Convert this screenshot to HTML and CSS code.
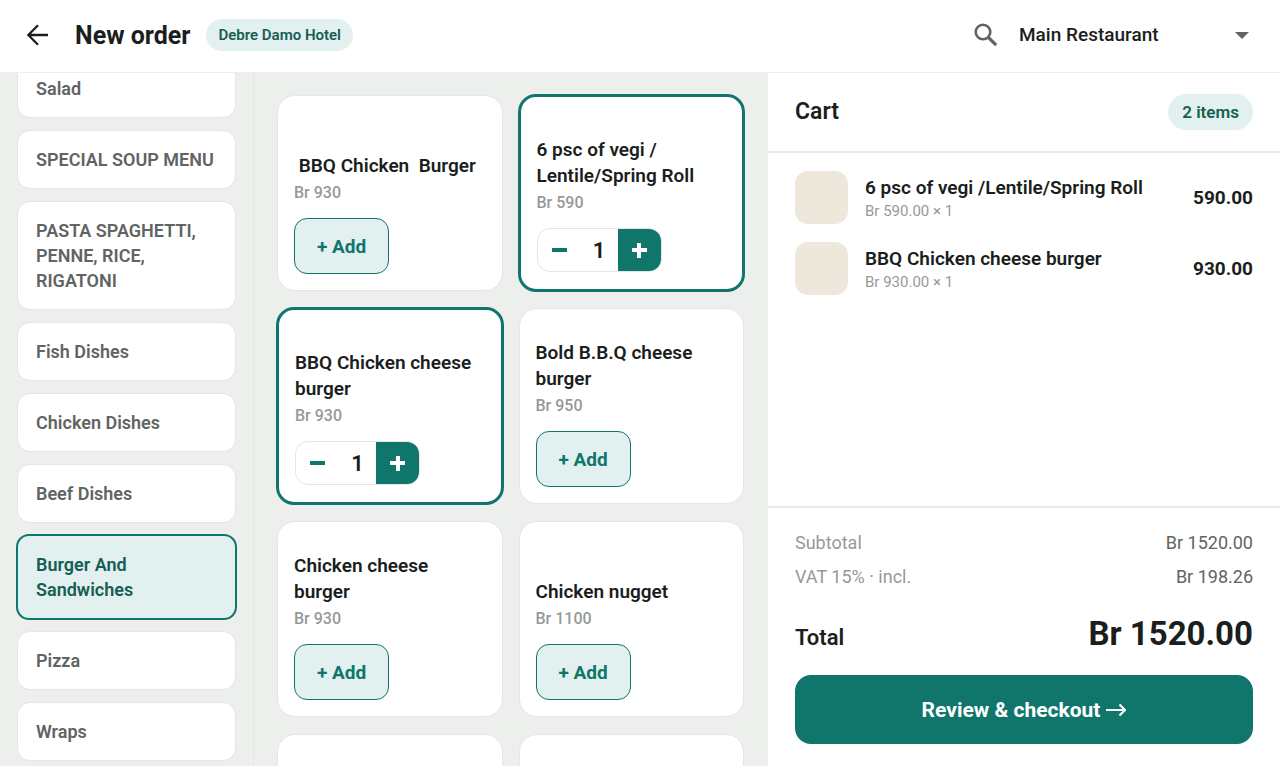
FILE: index.html
```
<!DOCTYPE html>
<html lang="en">

<head>
    <meta charset="UTF-8">
    <meta name="viewport" content="width=device-width, initial-scale=1.0">
    <title>New order</title>
    <link rel="stylesheet" href="styles.css">
</head>

<body>
    <header class="topbar">
        <button class="icon-btn" aria-label="Back">
            <svg width="22" height="22" viewBox="0 0 22 22" fill="none" stroke="currentColor" stroke-width="2.3">
                <path d="M21 11H1.500M11 1.200L1.300 11l9.700 9.800" />
            </svg>
        </button>
        <h1>New order</h1>
        <span class="badge badge-small">Debre Damo Hotel</span>
        <div class="topbar-right">
            <button class="icon-btn search" aria-label="Search">
                <svg width="24" height="24" viewBox="0 0 24 24" fill="none" stroke="currentColor">
                    <circle cx="9" cy="9" r="7.3" stroke-width="2.6" />
                    <path d="M14.3 14.3l7.9 7.9" stroke-width="3.2" />
                </svg>
            </button>
            <div class="select-wrap">
                <select aria-label="Restaurant">
                    <option>Main Restaurant</option>
                </select>
            </div>
        </div>
    </header>

    <div class="layout">
        <nav class="sidebar">
            <div class="category-list">
                <button class="category">Salad</button>
                <button class="category">SPECIAL SOUP MENU</button>
                <button class="category">PASTA SPAGHETTI, PENNE, RICE, RIGATONI</button>
                <button class="category">Fish Dishes</button>
                <button class="category">Chicken Dishes</button>
                <button class="category">Beef Dishes</button>
                <button class="category active">Burger And Sandwiches</button>
                <button class="category">Pizza</button>
                <button class="category">Wraps</button>
            </div>
        </nav>

        <main class="menu">
            <div class="menu-grid">
                <article class="item">
                    <h2> BBQ Chicken  Burger</h2>
                    <p class="price">Br 930</p>
                    <button class="add-btn">+ Add</button>
                </article>
                <article class="item selected">
                    <h2>6 psc of vegi /<wbr>Lentile/Spring Roll</h2>
                    <p class="price">Br 590</p>
                    <div class="stepper">
                        <button class="minus" aria-label="Remove one"></button>
                        <span>1</span>
                        <button class="plus" aria-label="Add one"></button>
                    </div>
                </article>
                <article class="item selected">
                    <h2>BBQ Chicken cheese burger</h2>
                    <p class="price">Br 930</p>
                    <div class="stepper">
                        <button class="minus" aria-label="Remove one"></button>
                        <span>1</span>
                        <button class="plus" aria-label="Add one"></button>
                    </div>
                </article>
                <article class="item">
                    <h2>Bold B.B.Q cheese burger</h2>
                    <p class="price">Br 950</p>
                    <button class="add-btn">+ Add</button>
                </article>
                <article class="item">
                    <h2>Chicken cheese burger</h2>
                    <p class="price">Br 930</p>
                    <button class="add-btn">+ Add</button>
                </article>
                <article class="item">
                    <h2>Chicken nugget</h2>
                    <p class="price">Br 1100</p>
                    <button class="add-btn">+ Add</button>
                </article>
                <article class="item"></article>
                <article class="item"></article>
            </div>
        </main>

        <aside class="cart">
            <div class="cart-header">
                <h2>Cart</h2>
                <span class="badge">2 items</span>
            </div>
            <ul class="cart-items">
                <li>
                    <div class="thumb"></div>
                    <div class="cart-info">
                        <h3>6 psc of vegi /Lentile/Spring Roll</h3>
                        <p>Br 590.00 × 1</p>
                    </div>
                    <strong>590.00</strong>
                </li>
                <li>
                    <div class="thumb"></div>
                    <div class="cart-info">
                        <h3>BBQ Chicken cheese burger</h3>
                        <p>Br 930.00 × 1</p>
                    </div>
                    <strong>930.00</strong>
                </li>
            </ul>
            <div class="cart-footer">
                <div class="row"><span>Subtotal</span><span class="amount">Br 1520.00</span></div>
                <div class="row"><span>VAT 15% · incl.</span><span class="amount">Br 198.26</span></div>
                <div class="total"><span>Total</span><strong>Br 1520.00</strong></div>
                <button class="checkout">
                    Review &amp; checkout
                    <svg width="20" height="14" viewBox="0 0 20 14" fill="none" stroke="currentColor" stroke-width="2.2">
                        <path d="M0 7h19M13.5 1.5L19 7l-5.500 5.500" />
                    </svg>
                </button>
            </div>
        </aside>
    </div>
</body>

</html>
```
FILE: styles.css
```
:root {
    --primary: #10766c;
    --primary-dark: #155e54;
    --primary-light: #e2f0ef;
    --background: #edefed;
    --line: #e4e7e5;
    --text: #1a1e1d;
    --text-mid: #616462;
    --text-light: #979998;
}

* {
    margin: 0;
    padding: 0;
    box-sizing: border-box;
}

body {
    font-family: Roboto, "Liberation Sans", sans-serif;
    background: var(--background);
    color: var(--text);
    height: 100vh;
    display: flex;
    flex-direction: column;
    overflow: hidden;
}

button,
select {
    font-family: inherit;
    border: none;
    background: none;
    cursor: pointer;
}

/* Top bar */
.topbar {
    display: flex;
    align-items: center;
    height: 73px;
    flex-shrink: 0;
    padding: 0 27px 2px;
    background: #fff;
    border-bottom: 1px solid var(--background);
}

.icon-btn {
    display: flex;
    color: var(--text);
}

.icon-btn.search {
    color: var(--text-mid);
}

.topbar h1 {
    font-size: 25px;
    font-weight: 700;
    line-height: 32px;
    margin: 1px 16px 0 26px;
}

.badge {
    background: var(--primary-light);
    color: var(--primary-dark);
    font-size: 17px;
    font-weight: 600;
    line-height: 20px;
    padding: 8px 14px;
    border-radius: 18px;
}

.badge-small {
    font-size: 15px;
    padding: 6px 12px;
}

.topbar-right {
    display: flex;
    align-items: center;
    gap: 21px;
    margin-left: auto;
}

.select-wrap {
    position: relative;
    width: 234px;
}

.select-wrap::after {
    content: "";
    position: absolute;
    right: 4px;
    top: 50%;
    margin-top: -3px;
    border: 7px solid transparent;
    border-top-color: var(--text-mid);
    border-bottom: none;
    pointer-events: none;
}

select {
    appearance: none;
    width: 100%;
    color: var(--text);
    font-size: 19px;
    font-weight: 500;
    line-height: 28px;
}

/* Columns */
.layout {
    display: grid;
    grid-template-columns: 254px 1fr 40%;
    flex: 1;
    min-height: 0;
}

.sidebar {
    overflow: hidden;
    padding: 0 17px;
    border-right: 1px solid var(--line);
}

.category-list {
    display: flex;
    flex-direction: column;
    gap: 12px;
    margin: -14px 0 12px;
}

.category {
    background: #fff;
    border: 1px solid var(--line);
    border-radius: 13px;
    padding: 16px 18px;
    color: var(--text-mid);
    font-size: 18px;
    font-weight: 600;
    line-height: 25px;
    text-align: left;
}

.category.active {
    background: var(--primary-light);
    border: 2px solid var(--primary);
    color: var(--primary-dark);
    margin: -1px;
}

/* Menu */
.menu {
    overflow: hidden;
    padding: 22px 24px 22px 23px;
}

.menu-grid {
    display: grid;
    grid-template-columns: 1fr 1fr;
    grid-auto-rows: minmax(196px, auto);
    gap: 17px 16px;
}

.item {
    display: flex;
    flex-direction: column;
    justify-content: flex-end;
    align-items: flex-start;
    background: #fff;
    border: 1px solid var(--line);
    border-radius: 18px;
    padding: 16px;
}

.item.selected {
    border: 3px solid var(--primary);
    margin: -1px;
    padding-bottom: 17px;
}

.item h2 {
    font-size: 19px;
    font-weight: 600;
    line-height: 26px;
    white-space: pre-wrap;
}

.price {
    color: var(--text-light);
    font-size: 16px;
    font-weight: 500;
    line-height: 22px;
    margin: 3px 0 14px;
}

.add-btn {
    background: var(--primary-light);
    border: 1px solid var(--primary);
    border-radius: 13px;
    width: 95px;
    height: 56px;
    color: var(--primary);
    font-size: 19px;
    font-weight: 700;
}

.stepper {
    display: flex;
    align-items: center;
    width: 125px;
    height: 44px;
    border: 1px solid var(--line);
    border-radius: 13px;
    overflow: hidden;
}

.stepper span {
    flex: 1;
    text-align: center;
    font-size: 22px;
    font-weight: 600;
}

.stepper button {
    position: relative;
    width: 43px;
    height: 100%;
    color: var(--primary);
}

.stepper .plus {
    background: var(--primary);
    color: #fff;
}

.stepper button::before,
.stepper .plus::after {
    content: "";
    position: absolute;
    inset: 0;
    margin: auto;
    width: 15px;
    height: 4px;
    background: currentColor;
}

.stepper .plus::after {
    width: 4px;
    height: 15px;
}

/* Cart */
.cart {
    display: flex;
    flex-direction: column;
    min-width: 0;
    background: #fff;
}

.cart-header {
    display: flex;
    align-items: center;
    justify-content: space-between;
    padding: 21px 27px;
    border-bottom: 2px solid #e8ebe9;
}

.cart-header h2 {
    font-size: 23px;
    font-weight: 600;
    line-height: 28px;
}

.cart-items {
    flex: 1;
    list-style: none;
    padding: 18px 27px;
    overflow: hidden;
}

.cart-items li {
    display: flex;
    align-items: center;
    gap: 17px;
    margin-bottom: 18px;
}

.thumb {
    width: 53px;
    height: 53px;
    border-radius: 13px;
    background: #ede7dc;
}

.cart-info {
    flex: 1;
}

.cart-info h3 {
    font-size: 19px;
    font-weight: 600;
    line-height: 26px;
}

.cart-info p {
    color: var(--text-light);
    font-size: 15px;
    line-height: 20px;
}

.cart-items strong {
    font-size: 19px;
    font-weight: 700;
}

.cart-footer {
    padding: 18px 27px 22px;
    border-top: 2px solid #e8ebe9;
}

.row {
    display: flex;
    justify-content: space-between;
    color: var(--text-light);
    font-size: 18px;
    line-height: 34px;
}

.row .amount {
    color: var(--text-mid);
}

.total {
    display: flex;
    justify-content: space-between;
    align-items: baseline;
    font-size: 22px;
    font-weight: 600;
    line-height: 40px;
    margin: 20px 0 17px;
}

.total strong {
    font-size: 33px;
    font-weight: 700;
}

.checkout {
    display: flex;
    align-items: center;
    justify-content: center;
    gap: 6px;
    width: 100%;
    height: 69px;
    border-radius: 16px;
    background: var(--primary);
    color: #fff;
    font-size: 21px;
    font-weight: 700;
}
```
